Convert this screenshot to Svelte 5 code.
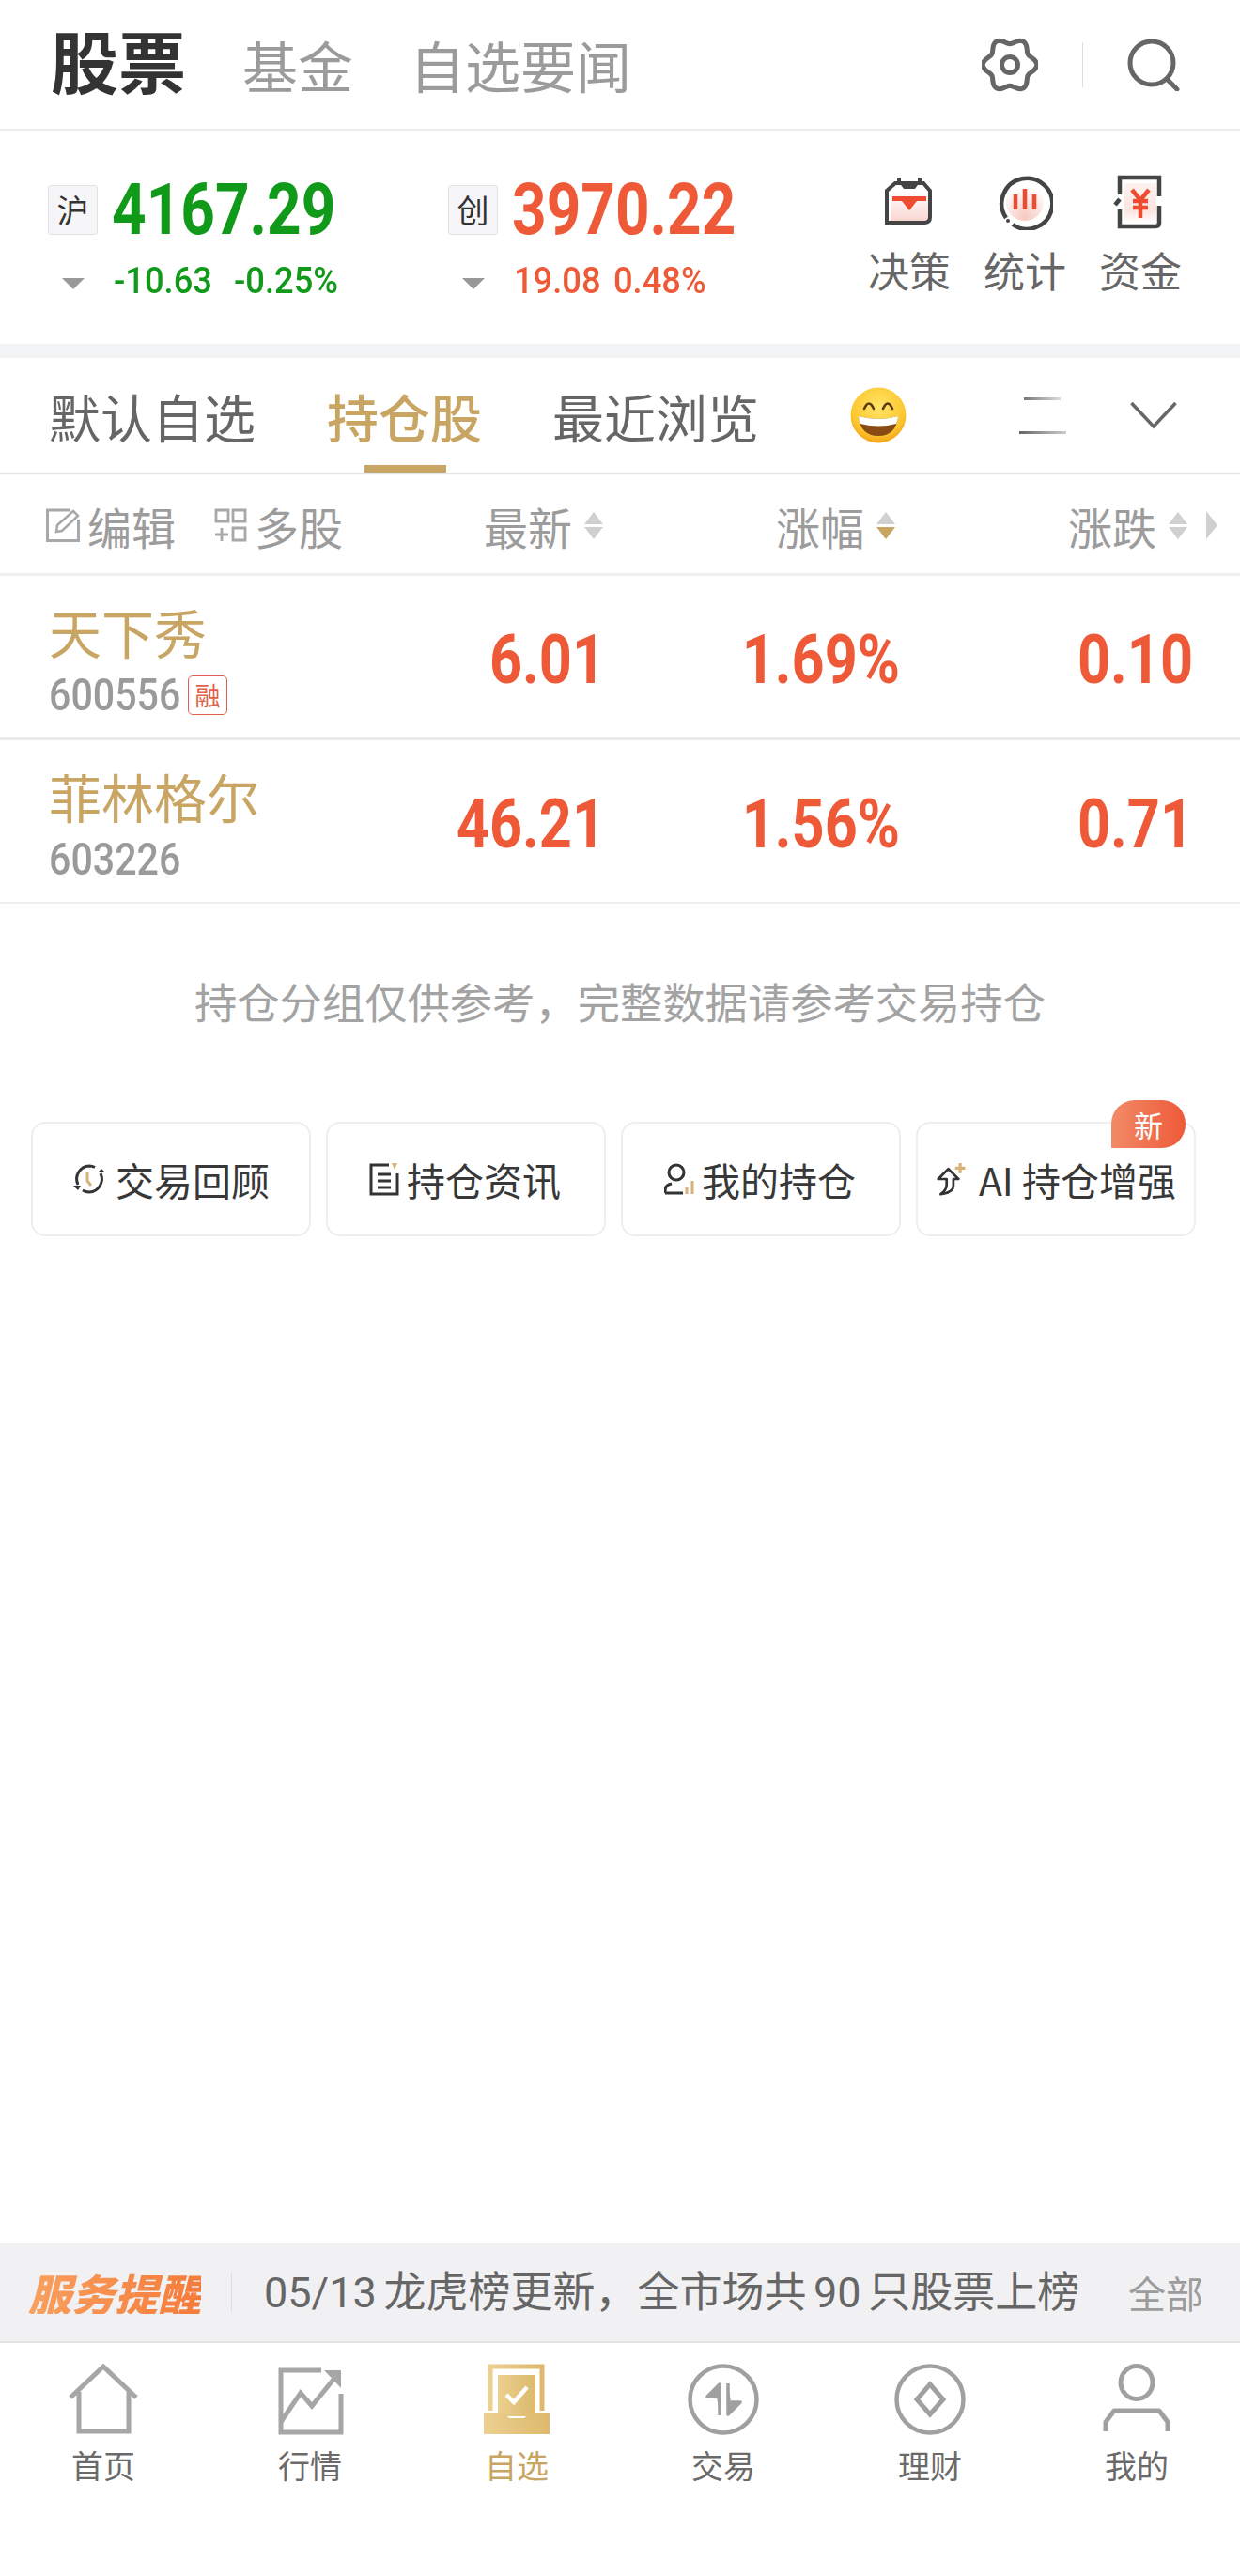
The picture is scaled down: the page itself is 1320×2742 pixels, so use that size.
<script>
  const gearPts = Array.from({ length: 120 }, (_, i) => {
    const t = (i / 120) * Math.PI * 2;
    const r = 25.5 + 3.2 * Math.cos(6 * t);
    return `${(30 + r * Math.cos(t)).toFixed(1)},${(30 + r * Math.sin(t)).toFixed(1)}`;
  }).join(' ');

  const rows = [
    { name: '天下秀', code: '600556', tag: true, price: '6.01', pct: '1.69%', chg: '0.10' },
    { name: '菲林格尔', code: '603226', tag: false, price: '46.21', pct: '1.56%', chg: '0.71' }
  ];
</script>

<div class="page">
  <header class="top">
    <div class="top-tabs">
      <span class="t-main">股票</span>
      <span class="t-sub t1">基金</span>
      <span class="t-sub t2">自选要闻</span>
    </div>
    <div class="top-icons">
      <svg class="gear" viewBox="0 0 60 60"><polygon points={gearPts} fill="none" stroke="#666" stroke-width="5" stroke-linejoin="round" /><circle cx="30" cy="30" r="8.5" fill="none" stroke="#666" stroke-width="5" /></svg>
      <i class="vline"></i>
      <svg class="search" viewBox="0 0 56 56"><circle cx="26" cy="26" r="23" fill="none" stroke="#666" stroke-width="5" /><path d="M42 43 L53 54" stroke="#666" stroke-width="5" stroke-linecap="round" /></svg>
    </div>
  </header>

  <section class="indices">
    <div class="idx idx-a">
      <div class="idx-l1"><span class="badge">沪</span><span class="big num green">4167.29</span></div>
      <div class="idx-l2"><i class="caret"></i><span class="small num green w1">-10.63</span><span class="small num green">-0.25%</span></div>
    </div>
    <div class="idx idx-b">
      <div class="idx-l1"><span class="badge">创</span><span class="big num red">3970.22</span></div>
      <div class="idx-l2"><i class="caret"></i><span class="small num red w2">19.08</span><span class="small num red">0.48%</span></div>
    </div>
    <div class="quick">
      <div class="q">
        <svg viewBox="0 0 60 60">
          <defs><linearGradient id="pk" x1="0" y1="0" x2="0" y2="1"><stop offset="0" stop-color="#fff" /><stop offset="1" stop-color="#f9d6d0" /></linearGradient></defs>
          <rect x="10" y="18" width="40" height="32" fill="url(#pk)" />
          <path d="M15 10 H45 L52 18 V46 Q52 52 46 52 H6 V18 Z" fill="none" stroke="#444" stroke-width="4" />
          <path d="M19 4 V12 M41 4 V12" stroke="#444" stroke-width="4" />
          <path d="M19 9 H41 L36 16 H24 Z" fill="#444" />
          <path d="M12 24 H48 V29 H38 L30 39 L22 29 H12 Z" fill="#ee4c32" />
        </svg>
        <span>决策</span>
      </div>
      <div class="q">
        <svg viewBox="0 0 60 60">
          <defs><radialGradient id="pk2" cx=".5" cy=".9" r=".8"><stop offset="0" stop-color="#f7c9c2" /><stop offset="1" stop-color="#fff" /></radialGradient></defs>
          <circle cx="30" cy="30" r="20" fill="url(#pk2)" />
          <path d="M10 47 A27 27 0 1 1 17 54" fill="none" stroke="#444" stroke-width="4.5" />
          <circle cx="12" cy="50" r="2" fill="#444" />
          <path d="M20 22 V38 M30 16 V38 M40 22 V38" stroke="#ee4c32" stroke-width="4.5" />
        </svg>
        <span>统计</span>
      </div>
      <div class="q">
        <svg viewBox="0 0 60 60">
          <defs><linearGradient id="pk3" x1="0" y1="0" x2="0" y2="1"><stop offset="0" stop-color="#fdf2ef" /><stop offset=".7" stop-color="#fce4df" /><stop offset="1" stop-color="#fff" /></linearGradient></defs>
          <rect x="13" y="10" width="34" height="42" fill="url(#pk3)" />
          <path d="M50 24 V4 H8 V22 M3 33 L8 27 M8 38 V56 H46 Q50 56 50 52 V34" fill="none" stroke="#444" stroke-width="4.5" />
          <path d="M21 17 L30 28 L39 17 M22 29 H38 M22 36 H38 M30 27 V47" fill="none" stroke="#ee4c32" stroke-width="4.5" />
        </svg>
        <span>资金</span>
      </div>
    </div>
  </section>

  <div class="band"></div>

  <nav class="tabs">
    <span class="tab">默认自选</span>
    <span class="tab on">持仓股</span>
    <span class="tab">最近浏览</span>
    <svg class="emoji" viewBox="0 0 60 60">
      <defs>
        <radialGradient id="ey" cx=".5" cy=".35" r=".7"><stop offset="0" stop-color="#ffe566" /><stop offset=".7" stop-color="#fdc62f" /><stop offset="1" stop-color="#f19a12" /></radialGradient>
      </defs>
      <circle cx="30" cy="30" r="29.5" fill="url(#ey)" />
      <path d="M15 23 Q20 12 25 23 M35 23 Q40 12 45 23" fill="none" stroke="#5a3a10" stroke-width="2.6" stroke-linecap="round" />
      <path d="M9 31 Q30 37 51 31 Q49 52 30 52 Q11 52 9 31 Z" fill="#8a4a14" />
      <path d="M9 31 Q30 37 51 31 Q50.5 37 49 39 Q30 44 11 39 Q9.5 37 9 31 Z" fill="#fff" />
    </svg>
    <span class="eq"><i class="e1"></i><i class="e2"></i></span>
    <svg class="chev" viewBox="0 0 50 30"><path d="M1.5 2 L25 27 L48.5 2" fill="none" stroke="#666" stroke-width="3.5" /></svg>
  </nav>

  <div class="thead grid">
    <div class="th-left">
      <svg class="ic-edit" viewBox="0 0 36 36"><path d="M26 2 H1.5 V34.5 H34.5 V12" fill="none" stroke="#a8a8a8" stroke-width="3" /><path d="M11 25 L12 18 L29 3 L34 8 L17 24 Z" fill="none" stroke="#a8a8a8" stroke-width="2.5" /></svg>
      <span class="th-t">编辑</span>
      <svg class="ic-multi" viewBox="0 0 36 36"><path d="M3 2 H16 V14 H3 Z M21 2 H34 V14 H21 Z M21 21 H34 V34 H21 Z M9 21 V35 M2 28 H16" fill="none" stroke="#a8a8a8" stroke-width="2.8" /></svg>
      <span class="th-t">多股</span>
    </div>
    <div class="th"><span class="th-t">最新</span><span class="sort"><i class="up"></i><i class="dn"></i></span></div>
    <div class="th"><span class="th-t">涨幅</span><span class="sort"><i class="up"></i><i class="dn gold"></i></span></div>
    <div class="th"><span class="th-t">涨跌</span><span class="sort"><i class="up"></i><i class="dn"></i></span></div>
    <i class="more"></i>
  </div>

  {#each rows as r, i}
    <div class="row grid" class:first={i === 0}>
      <div class="cell-name">
        <span class="nm">{r.name}</span>
        <span class="cd"><span class="num code">{r.code}</span>{#if r.tag}<span class="rong">融</span>{/if}</span>
      </div>
      <span class="val num p1">{r.price}</span>
      <span class="val num p2">{r.pct}</span>
      <span class="val num p3">{r.chg}</span>
    </div>
  {/each}

  <p class="note">持仓分组仅供参考，完整数据请参考交易持仓</p>

  <div class="btns">
    <div class="btn">
      <svg viewBox="0 0 36 36"><path d="M6 24 A14 14 0 0 1 18 4 A14 14 0 0 1 24 5.5 M30 12 A14 14 0 0 1 18 32 A14 14 0 0 1 11 30" fill="none" stroke="#333" stroke-width="3" /><path d="M1 25 H9 L6 30 Z M27 11 H35 L31 7 Z" fill="#333" /><path d="M16 11 V20 L20 25" fill="none" stroke="#d7b27a" stroke-width="3" /></svg>
      <span>交易回顾</span>
    </div>
    <div class="btn b2">
      <svg viewBox="0 0 32 36"><path d="M21 3 H2 V34 H30 V12 M9 13 H23 M9 20 H23 M9 27 H23" fill="none" stroke="#333" stroke-width="3" /><path d="M24 1 H30 L27 8 Z" fill="#d7b27a" /></svg>
      <span>持仓资讯</span>
    </div>
    <div class="btn b2">
      <svg viewBox="0 0 32 36"><circle cx="13" cy="11" r="8" fill="none" stroke="#333" stroke-width="3" /><path d="M1 33 V31 Q1 24 8 23 M1 33 H20" fill="none" stroke="#333" stroke-width="3" /><path d="M24 27 V34 M30 20 V34" stroke="#d7b27a" stroke-width="3" /></svg>
      <span>我的持仓</span>
    </div>
    <div class="btn ai">
      <svg viewBox="0 0 36 40"><path d="M1 20 L13 8 L25 20 H19 V28 Q19 36 4 38 Q11 33 11 27 V20 Z" fill="none" stroke="#333" stroke-width="3" stroke-linejoin="round" /><path d="M27 1 V13 M21 7 H33" stroke="#d7b27a" stroke-width="3.5" /></svg>
      <span>AI 持仓增强</span>
      <b class="new">新</b>
    </div>
  </div>

  <div class="spacer"></div>

  <div class="notice">
    <span class="n-brand">服务提醒</span>
    <i class="n-sep"></i>
    <span class="n-text">05/13 龙虎榜更新，全市场共 90 只股票上榜</span>
    <span class="n-all">全部</span>
  </div>

  <footer class="nav">
    <div class="ni">
      <svg viewBox="0 0 76 76"><path d="M3 36 L38 3 L73 36" fill="none" stroke="#a6a6a6" stroke-width="5" /><path d="M12 30 V72 H65 V30" fill="none" stroke="#a6a6a6" stroke-width="5" /></svg>
      <span>首页</span>
    </div>
    <div class="ni">
      <svg viewBox="0 0 76 76"><path d="M50 7 H7 V73 H71 V32" fill="none" stroke="#a6a6a6" stroke-width="5" /><path d="M7 62 L28 31 L40 45 L66 13" fill="none" stroke="#a6a6a6" stroke-width="5" /><path d="M53 7 H71 V26 Z" fill="#a6a6a6" /></svg>
      <span>行情</span>
    </div>
    <div class="ni active">
      <svg viewBox="0 0 76 76">
        <defs><linearGradient id="gd" x1="0" y1="0" x2="1" y2="0"><stop offset="0" stop-color="#ecd08f" /><stop offset="1" stop-color="#dcb96c" /></linearGradient></defs>
        <path d="M10 50 V3 H65 V50" fill="none" stroke="url(#gd)" stroke-width="5" />
        <rect x="18" y="12" width="40" height="44" fill="url(#gd)" />
        <path d="M27 33 L35 41 L49 25" fill="none" stroke="#fff" stroke-width="4.5" />
        <path d="M3 52 H24 L30 58 H46 L52 52 H73 V75 H3 Z" fill="url(#gd)" />
      </svg>
      <span>自选</span>
    </div>
    <div class="ni">
      <svg viewBox="0 0 76 76"><circle cx="38" cy="38" r="35.5" fill="none" stroke="#a0a0a0" stroke-width="4.5" /><path d="M34 55 V22 L21 35 H31 M43 21 V54 L56 41 H46" fill="#a0a0a0" stroke="#a0a0a0" stroke-width="3.5" stroke-linejoin="round" /></svg>
      <span>交易</span>
    </div>
    <div class="ni">
      <svg viewBox="0 0 76 76"><circle cx="38" cy="38" r="35.5" fill="none" stroke="#a0a0a0" stroke-width="4.5" /><path d="M38 22 L52 38 L38 54 L24 38 Z" fill="none" stroke="#a0a0a0" stroke-width="5" /></svg>
      <span>理财</span>
    </div>
    <div class="ni">
      <svg viewBox="0 0 76 76"><ellipse cx="38" cy="20" rx="17" ry="17.5" fill="none" stroke="#a0a0a0" stroke-width="5" /><path d="M5 72 V62 L14 50 H62 L71 62 V72" fill="none" stroke="#a0a0a0" stroke-width="5" stroke-linejoin="round" /></svg>
      <span>我的</span>
    </div>
  </footer>
</div>

<style>
  :global(body) {
    margin: 0;
    background: #fff;
  }
  .page {
    width: 1320px;
    height: 2742px;
    display: flex;
    flex-direction: column;
    font-family: "Noto Sans CJK SC", "Noto Sans", sans-serif;
    line-height: 1;
    overflow: hidden;
    color: #666;
  }
  i { display: block; }
  .num {
    font-family: Roboto, sans-serif;
    font-weight: 500;
    white-space: nowrap;
  }
  .green { color: #11991a; }
  .red { color: #ee5a38; }

  /* header */
  .top {
    height: 137px;
    border-bottom: 2px solid #ececec;
    display: flex;
    align-items: center;
    justify-content: space-between;
    padding: 0 64px 0 54px;
    box-sizing: content-box;
  }
  .top-tabs { display: flex; align-items: flex-end; padding-bottom: 12px; }
  .t-main { font-size: 72px; font-weight: 700; color: #333; }
  .t-sub { font-size: 59px; color: #9b9b9b; margin-bottom: 1px; }
  .t1 { margin-left: 60px; }
  .t2 { margin-left: 60px; }
  .top-icons { display: flex; align-items: center; }
  .gear { width: 60px; height: 60px; }
  .vline { width: 1px; height: 48px; background: #ddd; margin: 0 47px; }
  .search { width: 56px; height: 56px; }

  /* indices */
  .indices {
    height: 227px;
    display: flex;
    padding-left: 51px;
  }
  .idx { padding-top: 57px; }
  .idx-a { width: 426px; }
  .idx-b { width: 395px; }
  .idx-l1 { display: flex; align-items: center; height: 54px; }
  .badge {
    width: 53px;
    height: 53px;
    box-sizing: border-box;
    border: 1px solid #e3e3e3;
    border-radius: 3px;
    background: #f6f6f8;
    color: #333;
    font-size: 34px;
    display: flex;
    align-items: center;
    justify-content: center;
    flex: none;
  }
  .big {
    font-size: 76px;
    font-weight: 700;
    margin-left: 15px;
    display: inline-block;
    transform: scaleX(0.84);
    transform-origin: left center;
  }
  .idx-l2 { display: flex; align-items: center; height: 30px; margin-top: 34px; }
  .caret {
    width: 0;
    height: 0;
    border-left: 12px solid transparent;
    border-right: 12px solid transparent;
    border-top: 12px solid #999;
    margin: 6px 31px 0 15px;
    flex: none;
  }
  .small {
    font-size: 39px;
    display: inline-block;
    transform: scaleX(0.93);
    transform-origin: left center;
  }
  .w1 { width: 128px; }
  .w2 { width: 106px; }

  .quick {
    display: flex;
    gap: 35px;
    margin-left: 52px;
    padding-top: 46px;
  }
  .q { display: flex; flex-direction: column; align-items: center; width: 88px; }
  .q svg { width: 60px; height: 60px; }
  .q span { font-size: 44px; color: #666; margin-top: 20px; }

  .band { height: 15px; background: #f2f3f5; }

  /* tabs */
  .tabs {
    height: 124px;
    box-sizing: border-box;
    border-bottom: 2px solid #e4e4e4;
    display: flex;
    align-items: center;
    padding-left: 52px;
  }
  .tab { font-size: 55px; color: #666; }
  .tab.on {
    color: #c8a562;
    font-weight: 500;
    margin: 0 75px 0 76px;
    position: relative;
  }
  .tab.on::after {
    content: "";
    position: absolute;
    left: 40px;
    bottom: -33px;
    width: 87px;
    height: 8px;
    background: #c8a562;
  }
  .emoji { width: 60px; height: 60px; margin-left: 97px; }
  .eq { width: 50px; margin-left: 120px; }
  .e1 { height: 3px; width: 39px; margin: 0 0 33px 5px; background: linear-gradient(90deg, #777, #ddd); }
  .e2 { height: 3px; width: 50px; background: linear-gradient(90deg, #666, #ccc); }
  .chev { width: 50px; height: 30px; margin-left: 68px; }

  /* table */
  .grid {
    display: grid;
    grid-template-columns: 440px 204px 311px 311px 1fr;
    align-items: center;
  }
  .thead { height: 108px; padding-top: 3px; border-bottom: 3px solid #eee; box-sizing: border-box; }
  .th-left { display: flex; align-items: center; padding-left: 49px; }
  .ic-edit { width: 36px; height: 36px; }
  .ic-multi { width: 36px; height: 36px; margin-left: 40px; }
  .th-t { font-size: 47px; color: #9c9c9c; margin-left: 8px; white-space: nowrap; }
  .th { display: flex; align-items: center; justify-content: flex-end; }
  .sort { width: 21px; margin-left: 13px; margin-right: 1px; }
  .up, .dn { width: 0; height: 0; border-left: 10.5px solid transparent; border-right: 10.5px solid transparent; }
  .up { border-bottom: 13px solid #d0d0d0; margin-bottom: 3px; }
  .dn { border-top: 13px solid #d0d0d0; }
  .dn.gold { border-top-color: #c8a562; }
  .more {
    width: 0;
    height: 0;
    border-top: 15px solid transparent;
    border-bottom: 15px solid transparent;
    border-left: 12px solid #d0d0d0;
    margin-left: 18px;
  }

  .row { height: 175px; border-bottom: 3px solid #eaeaea; box-sizing: border-box; }
  .row:not(.first) { height: 174px; border-bottom-width: 2px; border-bottom-color: #eee; }
  .cell-name { display: flex; flex-direction: column; padding: 6px 0 0 52px; }
  .nm { font-size: 56px; color: #c8a562; }
  .cd { display: flex; align-items: center; margin-top: 19px; height: 42px; }
  .code {
    font-size: 49px;
    color: #9a9a9a;
    display: inline-block;
    width: 146px;
    transform: scaleX(0.84);
    transform-origin: left center;
  }
  .rong {
    width: 42px;
    height: 42px;
    box-sizing: border-box;
    border: 1.5px solid #e0604a;
    border-radius: 5px;
    color: #e0604a;
    font-size: 27px;
    margin-left: 2px;
    display: flex;
    align-items: center;
    justify-content: center;
  }
  .val {
    font-size: 72px;
    font-weight: 700;
    color: #ee5a38;
    text-align: right;
    padding-top: 7px;
    transform: scaleX(0.85);
    transform-origin: right center;
  }
  .p2 { margin-right: -3px; }
  .p3 { margin-right: -4px; }

  .note {
    margin: 81px 0 0;
    font-size: 45.3px;
    color: #a3a3a3;
    text-align: center;
    height: 45px;
  }

  .btns {
    display: grid;
    grid-template-columns: repeat(4, 298px);
    gap: 16px;
    padding-left: 33px;
    margin-top: 106px;
  }
  .btn {
    height: 122px;
    box-sizing: border-box;
    border: 2px solid #eee;
    border-radius: 15px;
    display: flex;
    align-items: center;
    justify-content: center;
    gap: 10px;
    color: #383838;
    font-size: 41px;
    position: relative;
  }
  .btn svg { width: 36px; height: 36px; flex: none; }
  .btn.b2 { gap: 8px; padding-right: 2px; }
  .btn.b2 svg { width: 32px; }
  .new {
    position: absolute;
    right: 9px;
    top: -25px;
    width: 79px;
    height: 51px;
    border-radius: 25px 25px 25px 0;
    background: linear-gradient(90deg, #f28a68, #ee5a38);
    color: #fff;
    font-size: 31px;
    font-weight: 400;
    display: flex;
    align-items: center;
    justify-content: center;
  }

  .spacer { flex: 1; }

  /* notice */
  .notice {
    height: 106px;
    box-sizing: border-box;
    background: #f1f1f3;
    border-bottom: 2px solid #e4e4e4;
    display: flex;
    align-items: center;
    padding-left: 30px;
  }
  .n-brand {
    font-size: 46px;
    font-weight: 900;
    font-style: italic;
    background: linear-gradient(90deg, #f9a05e, #f57b3a);
    -webkit-background-clip: text;
    background-clip: text;
    color: transparent;
  }
  .n-sep { width: 1px; height: 40px; background: #ddd; margin-left: 32px; }
  .n-text {
    font-family: Roboto, "Noto Sans CJK SC", sans-serif;
    font-size: 45px;
    word-spacing: -3.5px;
    color: #666;
    margin-left: 34px;
    white-space: nowrap;
    flex: 1;
  }
  .n-all { font-size: 40px; color: #9c9c9c; margin-right: 39px; }

  /* nav */
  .nav {
    height: 248px;
    display: grid;
    grid-template-columns: repeat(6, 220px);
    align-items: start;
    padding-top: 22px;
    box-sizing: border-box;
  }
  .ni { display: flex; flex-direction: column; align-items: center; color: #6a6a6a; }
  .ni svg { width: 76px; height: 76px; }
  .ni span { font-size: 34px; margin-top: 15px; }
  .ni.active span { color: #c8a562; }
</style>
